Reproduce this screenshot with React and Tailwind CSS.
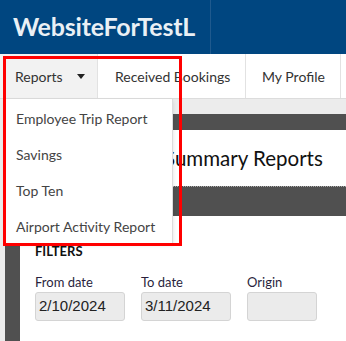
import React from "react";

const navItems = ["Received Bookings", "My Profile"];
const menuItems = ["Employee Trip Report", "Savings", "Top Ten", "Airport Activity Report"];

const Field = ({ label, value, width }) => (
  <div className="flex flex-col">
    <label className="text-[13px] leading-[16px] text-[#2a1f3d] mb-[2px]">{label}</label>
    <div
      className={`${width} h-[29px] rounded-[3px] border border-[#d4d4d4] bg-[#ebebeb] px-[3px] flex items-center text-[15px] text-[#222] font-['Liberation_Sans',Arial,sans-serif]`}
    >
      {value}
    </div>
  </div>
);

const App = () => {
  return (
    <div className="relative w-[346px] h-[341px] overflow-hidden bg-[#ececec] font-['Lato','Open_Sans',sans-serif]">
      {/* Header */}
      <div className="h-[54px] bg-[#004680] flex">
        <div className="w-[211px] border-r border-[#1f5a8e] flex items-center pl-[13px]">
          <span className="text-[25px] font-bold text-[#eaf0f5] tracking-[-0.2px]">WebsiteForTestL</span>
        </div>
      </div>

      {/* Nav */}
      <div className="h-[45px] bg-white border-b border-[#dcdcdc] flex text-[14px] text-[#333]">
        <div className="w-[98px] bg-[#f2f2f2] border-r border-[#e2e2e2] flex items-center pl-[15px]">
          Reports
          <svg className="ml-[14px]" width="8" height="5" viewBox="0 0 8 5">
            <path d="M0 0h8L4 5z" fill="#222" />
          </svg>
        </div>
        <div className="w-[148px] border-r border-[#e2e2e2] flex items-center pl-[17px]">{navItems[0]}</div>
        <div className="w-[95px] border-r border-[#e2e2e2] flex items-center pl-[16px]">{navItems[1]}</div>
      </div>

      {/* Main panel */}
      <div className="pt-[15px] pl-[5px]">
        <div className="h-[16px] bg-[#505050]" />
        <div className="h-[56px] bg-white flex items-center pl-[159px]">
          <h1 className="text-[20.5px] text-[#111] whitespace-nowrap">Summary Reports</h1>
        </div>
        <div className="h-[30px] bg-[#505050] border-t border-dotted border-[#aaa]" />
        <div className="flex">
          <div className="w-[15px] h-[130px] bg-[#505050]" />
          <div className="flex-1 bg-white pl-[15px] pt-[27px]">
            <h2 className="text-[13px] font-bold text-[#111] leading-[16px] mb-[15px]">FILTERS</h2>
            <div className="flex gap-[16px]">
              <Field label="From date" value="2/10/2024" width="w-[90px]" />
              <Field label="To date" value="3/11/2024" width="w-[90px]" />
              <Field label="Origin" value="" width="w-[70px]" />
            </div>
          </div>
        </div>
      </div>

      {/* Dropdown */}
      <div className="absolute left-[5px] top-[99px] w-[168px] h-[144px] bg-white border-r border-[#dcdcdc] shadow-[0_2px_4px_rgba(0,0,0,0.12)] pt-[1px]">
        {menuItems.map((item) => (
          <div key={item} className="h-[36px] flex items-center pl-[11px] text-[14px] text-[#444]">
            {item}
          </div>
        ))}
      </div>

      {/* Annotation box */}
      <div className="absolute left-[3px] top-[56px] w-[179px] h-[190px] border-[3px] border-[#f00] pointer-events-none" />
    </div>
  );
};

export default App;
